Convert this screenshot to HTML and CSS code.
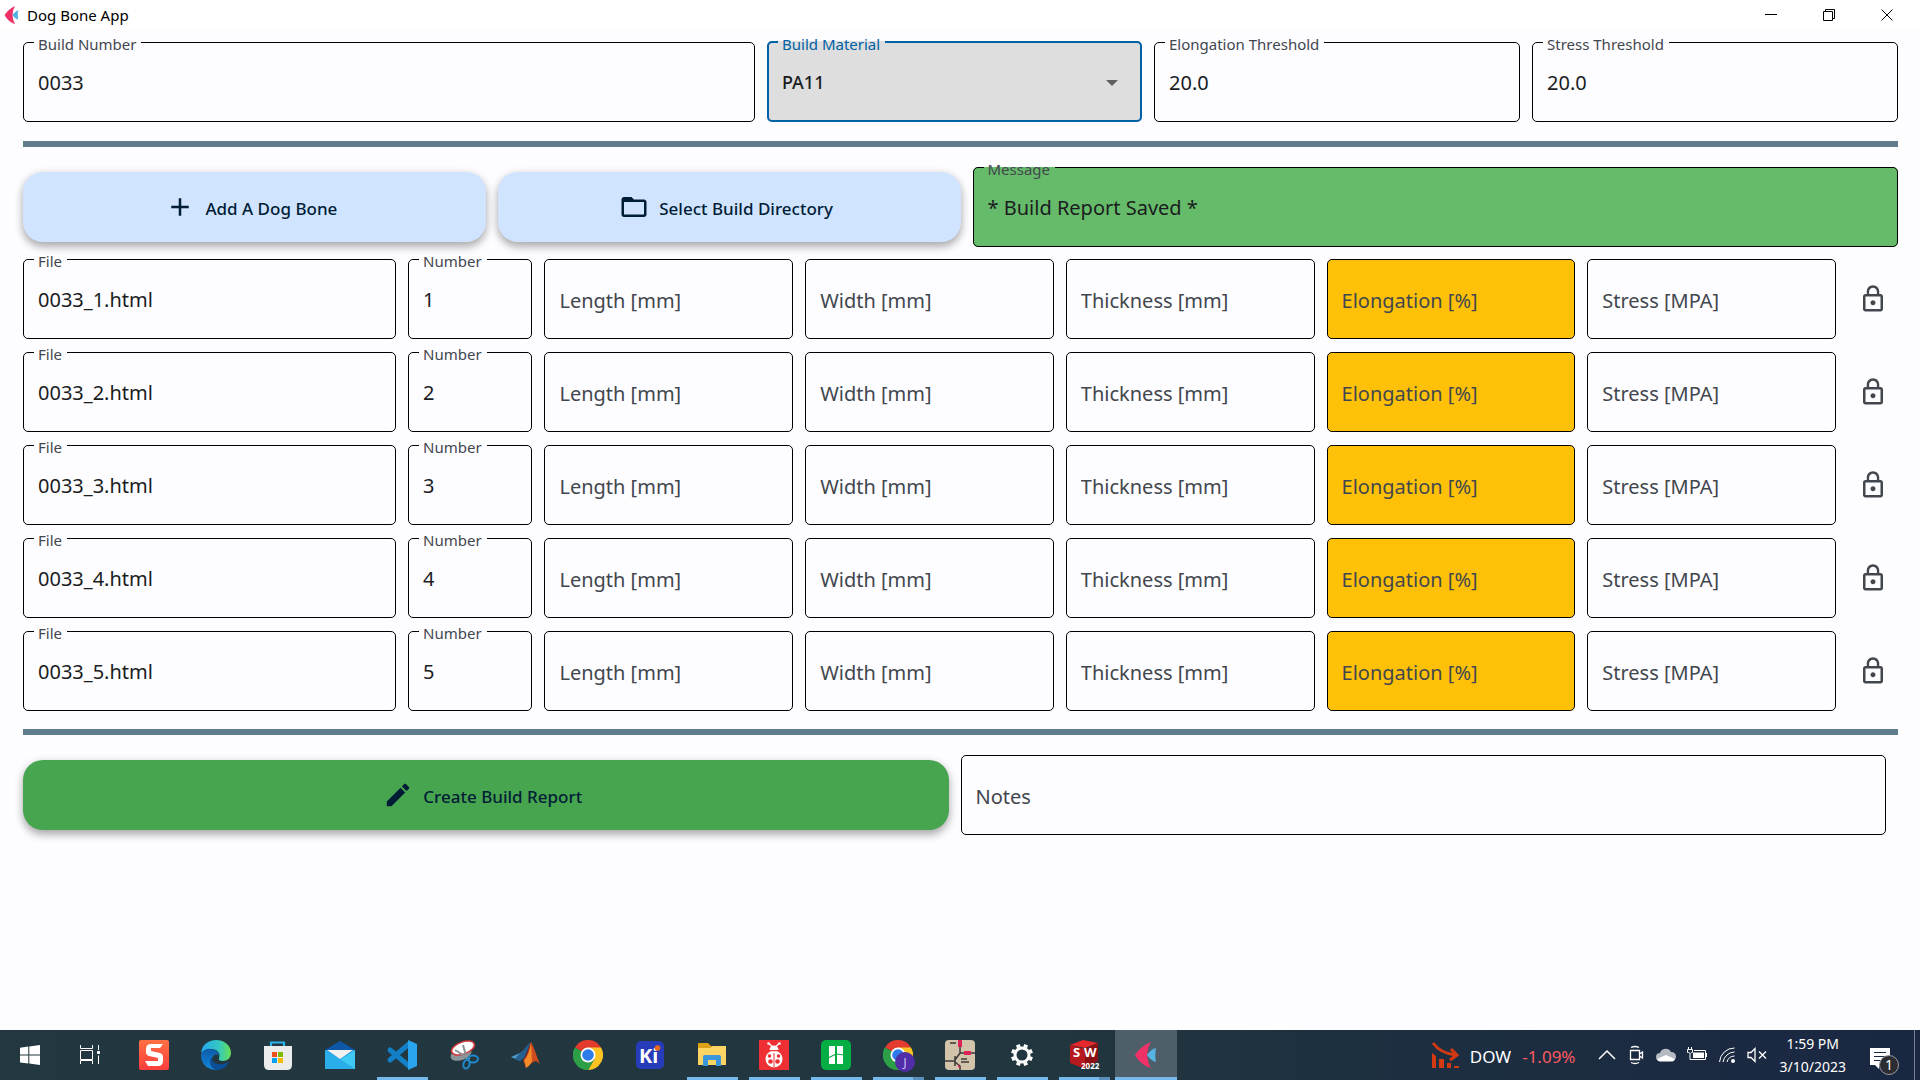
FILE: index.html
```html
<!DOCTYPE html>
<html lang="en">
<head>
<meta charset="utf-8">
<title>Dog Bone App</title>
<link rel="stylesheet" href="styles.css">
</head>
<body>
<svg class="sprite" aria-hidden="true">
  <symbol id="lock" viewBox="0 0 24 24"><path d="M12 17c1.1 0 2-.9 2-2s-.9-2-2-2-2 .9-2 2 .9 2 2 2zm6-9h-1V6c0-2.76-2.24-5-5-5S7 3.24 7 6v2H6c-1.1 0-2 .9-2 2v10c0 1.1.9 2 2 2h12c1.1 0 2-.9 2-2V10c0-1.1-.9-2-2-2zM8.900 6c0-1.710 1.390-3.100 3.100-3.100s3.100 1.390 3.100 3.100v2H8.900V6zM18 20H6V10h12v10z"/></symbol>
  <symbol id="flet" viewBox="0 0 30 30"><path fill="#ee3167" d="M20 2C13 5 7 10 4 15c3 6 9 11 16 13-5-8-5-18 0-26z"/><path fill="#56b4e4" d="M16 15c2-3 5-6 9-7-1 5-1 10 0 14-4-1-7-4-9-7z"/></symbol>
  <symbol id="chrome" viewBox="0 0 30 30"><path fill="#e33b2e" d="M15 15 2 7.500A15 15 0 0 1 28 7.500z"/><path fill="#2c9f47" d="M15 15 15 30A15 15 0 0 1 2 7.500z"/><path fill="#fcc422" d="M15 15V7.500h13A15 15 0 0 1 15 30l6.500-11z"/><path fill="#2c9f47" d="M2 7.500 8.500 18.700 15 22.500 21.500 18.700 15 30A15 15 0 0 1 2 7.500z"/><circle cx="15" cy="15" r="7.500" fill="#fff"/><circle cx="15" cy="15" r="5.800" fill="#2f7bea"/></symbol>
</svg>

<header class="titlebar">
  <svg class="app-logo" viewBox="3 2 23 26" preserveAspectRatio="none" aria-hidden="true"><use href="#flet" width="30" height="30"/></svg>
  <h1>Dog Bone App</h1>
  <div class="window-controls">
    <button type="button" aria-label="Minimize"><svg viewBox="0 0 12 12"><path d="M0 5.500h12"/></svg></button>
    <button type="button" aria-label="Restore"><svg viewBox="0 0 12 12"><path d="M.5 2.500h9v9h-9zM2.500 2.500v-2h9v9h-2"/></svg></button>
    <button type="button" aria-label="Close"><svg viewBox="0 0 12 12"><path d="M.5.5l11 11M11.500.5l-11 11"/></svg></button>
  </div>
</header>

<main>
  <section class="row settings">
    <fieldset class="field"><legend><label for="build-number">Build Number</label></legend><input id="build-number" type="text" value="0033"></fieldset>
    <fieldset class="field focused"><legend><label for="material">Build Material</label></legend>
      <select id="material"><option>PA11</option></select>
      <svg class="arrow" viewBox="0 0 12 6" aria-hidden="true"><path d="M0 0h12L6 6z"/></svg>
    </fieldset>
    <fieldset class="field"><legend><label for="elongation-threshold">Elongation Threshold</label></legend><input id="elongation-threshold" type="text" value="20.0"></fieldset>
    <fieldset class="field"><legend><label for="stress-threshold">Stress Threshold</label></legend><input id="stress-threshold" type="text" value="20.0"></fieldset>
  </section>

  <hr>

  <section class="row actions">
    <button type="button" class="action"><svg viewBox="0 0 24 24" aria-hidden="true"><path d="M19 13h-6v6h-2v-6H5v-2h6V5h2v6h6z"/></svg><span>Add A Dog Bone</span></button>
    <button type="button" class="action"><svg viewBox="0 0 24 24" aria-hidden="true"><path d="M20 6h-8l-2-2H4c-1.100 0-1.990.9-1.990 2L2 18c0 1.100.9 2 2 2h16c1.100 0 2-.9 2-2V8c0-1.100-.9-2-2-2zm0 12H4V8h16z"/></svg><span>Select Build Directory</span></button>
    <fieldset class="field success"><legend><label for="message">Message</label></legend><input id="message" type="text" value="* Build Report Saved *" readonly></fieldset>
  </section>

  <section class="bones">
    <div class="row bone">
      <fieldset class="field"><legend><label for="file-1">File</label></legend><input id="file-1" type="text" value="0033_1.html"></fieldset>
      <fieldset class="field"><legend><label for="number-1">Number</label></legend><input id="number-1" type="text" value="1"></fieldset>
      <input class="blank" type="text" aria-label="Length 1" placeholder="Length [mm]">
      <input class="blank" type="text" aria-label="Width 1" placeholder="Width [mm]">
      <input class="blank" type="text" aria-label="Thickness 1" placeholder="Thickness [mm]">
      <input class="blank warning" type="text" aria-label="Elongation 1" placeholder="Elongation [%]">
      <input class="blank" type="text" aria-label="Stress 1" placeholder="Stress [MPA]">
      <button type="button" class="lock" aria-label="Lock row 1"><svg><use href="#lock"/></svg></button>
    </div>
    <div class="row bone">
      <fieldset class="field"><legend><label for="file-2">File</label></legend><input id="file-2" type="text" value="0033_2.html"></fieldset>
      <fieldset class="field"><legend><label for="number-2">Number</label></legend><input id="number-2" type="text" value="2"></fieldset>
      <input class="blank" type="text" aria-label="Length 2" placeholder="Length [mm]">
      <input class="blank" type="text" aria-label="Width 2" placeholder="Width [mm]">
      <input class="blank" type="text" aria-label="Thickness 2" placeholder="Thickness [mm]">
      <input class="blank warning" type="text" aria-label="Elongation 2" placeholder="Elongation [%]">
      <input class="blank" type="text" aria-label="Stress 2" placeholder="Stress [MPA]">
      <button type="button" class="lock" aria-label="Lock row 2"><svg><use href="#lock"/></svg></button>
    </div>
    <div class="row bone">
      <fieldset class="field"><legend><label for="file-3">File</label></legend><input id="file-3" type="text" value="0033_3.html"></fieldset>
      <fieldset class="field"><legend><label for="number-3">Number</label></legend><input id="number-3" type="text" value="3"></fieldset>
      <input class="blank" type="text" aria-label="Length 3" placeholder="Length [mm]">
      <input class="blank" type="text" aria-label="Width 3" placeholder="Width [mm]">
      <input class="blank" type="text" aria-label="Thickness 3" placeholder="Thickness [mm]">
      <input class="blank warning" type="text" aria-label="Elongation 3" placeholder="Elongation [%]">
      <input class="blank" type="text" aria-label="Stress 3" placeholder="Stress [MPA]">
      <button type="button" class="lock" aria-label="Lock row 3"><svg><use href="#lock"/></svg></button>
    </div>
    <div class="row bone">
      <fieldset class="field"><legend><label for="file-4">File</label></legend><input id="file-4" type="text" value="0033_4.html"></fieldset>
      <fieldset class="field"><legend><label for="number-4">Number</label></legend><input id="number-4" type="text" value="4"></fieldset>
      <input class="blank" type="text" aria-label="Length 4" placeholder="Length [mm]">
      <input class="blank" type="text" aria-label="Width 4" placeholder="Width [mm]">
      <input class="blank" type="text" aria-label="Thickness 4" placeholder="Thickness [mm]">
      <input class="blank warning" type="text" aria-label="Elongation 4" placeholder="Elongation [%]">
      <input class="blank" type="text" aria-label="Stress 4" placeholder="Stress [MPA]">
      <button type="button" class="lock" aria-label="Lock row 4"><svg><use href="#lock"/></svg></button>
    </div>
    <div class="row bone">
      <fieldset class="field"><legend><label for="file-5">File</label></legend><input id="file-5" type="text" value="0033_5.html"></fieldset>
      <fieldset class="field"><legend><label for="number-5">Number</label></legend><input id="number-5" type="text" value="5"></fieldset>
      <input class="blank" type="text" aria-label="Length 5" placeholder="Length [mm]">
      <input class="blank" type="text" aria-label="Width 5" placeholder="Width [mm]">
      <input class="blank" type="text" aria-label="Thickness 5" placeholder="Thickness [mm]">
      <input class="blank warning" type="text" aria-label="Elongation 5" placeholder="Elongation [%]">
      <input class="blank" type="text" aria-label="Stress 5" placeholder="Stress [MPA]">
      <button type="button" class="lock" aria-label="Lock row 5"><svg><use href="#lock"/></svg></button>
    </div>
  </section>

  <hr class="lower">

  <section class="row report">
    <button type="button" class="action create"><svg viewBox="0 0 24 24" aria-hidden="true"><path d="M3 17.250V21h3.750L17.810 9.940l-3.750-3.750L3 17.250zM20.710 7.040c.39-.39.39-1.020 0-1.410l-2.340-2.340c-.39-.39-1.020-.39-1.410 0l-1.830 1.830 3.750 3.750 1.830-1.830z"/></svg><span>Create Build Report</span></button>
    <input class="blank" type="text" aria-label="Notes" placeholder="Notes">
  </section>
</main>

<footer class="taskbar">
  <nav class="launchers" aria-label="Taskbar">
    <button type="button" aria-label="Start"><svg viewBox="0 0 30 30" fill="#fff"><path d="M5 7.800l8.300-1.200v8H5zM14.300 6.400 25 5v9.600H14.300zM5 15.600h8.300v8L5 22.400zM14.300 15.600H25V25l-10.700-1.400z"/></svg></button>
    <button type="button" aria-label="Task View"><svg viewBox="0 0 30 30" fill="none" stroke="#fff"><path d="M5.500 5v3.500h12V5M5.500 10.500h12v9h-12zM5.500 24v-3.500h12V24M23.500 5v5M23.500 15.500V24"/><path fill="#fff" d="M22.500 11.500h2v2h-2z"/></svg></button>
    <button type="button" aria-label="Snagit" class="first-app"><svg viewBox="0 0 30 30"><defs><linearGradient id="sg" x2="0" y2="1"><stop stop-color="#ff7043"/><stop offset="1" stop-color="#fb3d3d"/></linearGradient></defs><rect width="30" height="30" rx="2" fill="url(#sg)"/><path d="M24 4H12q-5 0-5 5v3q0 3 3 4l9 2v3H6l3 5h10q5 0 5-5v-4q0-3-3-4l-9-2V8h9z" fill="#fff"/></svg></button>
    <button type="button" aria-label="Edge"><svg viewBox="0 0 30 30"><defs><linearGradient id="e1" x2="1"><stop stop-color="#25a9ef"/><stop offset=".6" stop-color="#35c8c0"/><stop offset="1" stop-color="#66e052"/></linearGradient><linearGradient id="e2" x2="0" y2="1"><stop stop-color="#0d5ba8"/><stop offset="1" stop-color="#1288dc"/></linearGradient></defs><path fill="url(#e1)" d="M0 13C1 5 7 0 15 0c9 0 15 6 15 13 0 5-4 8-8 8-3 0-5-1-4-3 2-5-2-9-8-9-5 0-8 2-10 4z"/><path fill="url(#e2)" d="M0 14c2-4 6-6 10-5 5 0 8 4 8 7-2-3-7-1-7 4 0 4 3 8 8 9C9 32-1 25 0 14z"/><path fill="#0c4f99" d="M11 17c-1 6 6 10 17 5-3 6-8 8-13 8-6-2-8-9-4-13z"/></svg></button>
    <button type="button" aria-label="Microsoft Store"><svg viewBox="0 0 30 30"><path d="M8 8V2.500h13V8" fill="none" stroke="#2cb4ea" stroke-width="2.200"/><path d="M1 6h28v19q0 5-5 5H6q-5 0-5-5z" fill="#ececec"/><path fill="#f1511b" d="M9 12h5v5H9z"/><path fill="#80bb01" d="M15 12h5v5h-5z"/><path fill="#00a3ee" d="M9 18h5v5H9z"/><path fill="#fbb900" d="M15 18h5v5h-5z"/></svg></button>
    <button type="button" aria-label="Mail"><svg viewBox="0 0 30 30"><path fill="#0d57a7" d="M0 10 15 1l15 9v4H0z"/><path fill="#1e91dc" d="M0 10h30v19H0z"/><path fill="#2aaeea" d="M0 10l15 9L0 29z"/><path fill="#3fcaf5" d="M30 10 0 29h30z"/><path fill="#2aaeea" d="M0 10l15 9 15 10H0z"/><path fill="#f1f1f1" d="M2 10h26l-13 9z"/></svg></button>
    <button type="button" aria-label="Visual Studio Code" class="running"><svg viewBox="0 0 30 30"><path d="M3 10 22 26M3 20 22 4" stroke="#137fc6" stroke-width="5" stroke-linecap="round"/><path d="M21 0l9 4v22l-9 4z" fill="#2ba4f0"/></svg></button>
    <button type="button" aria-label="Snipping Tool"><svg viewBox="0 0 30 30"><ellipse cx="12" cy="14" rx="11" ry="6" fill="#8c9599" transform="rotate(-20 12 14)"/><ellipse cx="14" cy="8" rx="12" ry="6" fill="#fff" stroke="#cf3438" stroke-width="1.500" transform="rotate(-20 14 8)"/><path d="M14 5l4 14M6 10l15 9" stroke="#8a9295" stroke-width="2"/><g fill="none" stroke="#2189cd" stroke-width="2"><ellipse cx="24" cy="19" rx="5" ry="3.500"/><ellipse cx="17.500" cy="24" rx="3" ry="4.500" transform="rotate(15 17 24)"/></g></svg></button>
    <button type="button" aria-label="MATLAB"><svg viewBox="0 0 30 30"><path fill="#4d9bd0" d="M0 17l9-4 5-3-5 11z"/><path fill="#285f91" d="M9 13c4-2 6-8 11-11l-7 16-4 3-5-2z"/><path fill="#a52a1b" d="M20 2c-3 6-4 14-8 18l3 8 7-6z"/><path fill="#f28b28" d="M20 2c-1 8-4 16-7 18l2 8c4-2 6-6 8-10z"/><path fill="#cf4c20" d="M20 2c4 7 6 16 9 22-3-3-5-4-8-1z"/></svg></button>
    <button type="button" aria-label="Chrome"><svg><use href="#chrome"/></svg></button>
    <button type="button" aria-label="KiCad"><svg viewBox="0 0 30 30"><rect x="1" y="1" width="28" height="28" rx="5" fill="#263cb9"/><text x="4" y="23" class="kicad">Ki</text><circle cx="22.500" cy="8" r="2.800" fill="#f06a1c"/></svg></button>
    <button type="button" aria-label="File Explorer" class="running"><svg viewBox="0 0 30 30"><path fill="#dda116" d="M1 3h10l3 3h14v5H1z"/><path fill="#fbd464" d="M1 8h12l3-2h13v19H1z"/><path fill="#3c96dc" d="M6 26V17q0-2 2-2h14q2 0 2 2v9h-5v-6h-8v6z"/></svg></button>
    <button type="button" aria-label="Ladybug" class="running"><svg viewBox="0 0 30 30"><path fill="#ee3034" d="M0 0h30v30H0z"/><path d="M10 3.500l3 3M20 3.500l-3 3" stroke="#fff" stroke-width="1.300"/><circle cx="9.500" cy="3.500" r="1.300" fill="#fff"/><circle cx="20.500" cy="3.500" r="1.300" fill="#fff"/><path d="M10.500 10a4.500 4.500 0 0 1 9 0z" fill="#fff"/><ellipse cx="15" cy="19" rx="8.500" ry="8.500" fill="#fff"/><g fill="#ee3034"><circle cx="10.500" cy="16" r="1.800"/><circle cx="19.500" cy="16" r="1.800"/><circle cx="11.500" cy="21.500" r="2.300"/><circle cx="18.500" cy="21.500" r="2.300"/><path d="M14.500 13h1v14h-1zM9 10.300h12v1H9z"/></g></svg></button>
    <button type="button" aria-label="Build Studio" class="running"><svg viewBox="0 0 30 30"><rect width="30" height="30" rx="5" fill="#04ae42"/><path fill="#fff" d="M8 6h6v18H8zM16 6h6v18h-6z"/><path d="M7 18l8-4 8 1" fill="none" stroke="#04ae42" stroke-width="1.200"/></svg></button>
    <button type="button" aria-label="Chrome profile J" class="running stacked"><svg viewBox="0 0 30 30"><use href="#chrome" width="30" height="30"/><circle cx="22" cy="22" r="10" fill="#512da8"/><text x="22" y="27" class="profile">J</text></svg></button>
    <button type="button" aria-label="Circuit Simulator" class="running"><svg viewBox="0 0 30 30"><rect width="30" height="30" rx="4" fill="#d1c4aa"/><path d="M15 0v13M0 21h10M10 16v10M10 20l5-7h15M10 22l5 4v4M5 3h6M16 19h6M16 22h8" stroke="#3b3838" stroke-width="1.500" fill="none"/><path fill="#dd2458" d="M13 0h4v7h-4zM19 11h7v4h-7zM13 24l3 4-3-1z"/></svg></button>
    <button type="button" aria-label="Settings" class="running"><svg viewBox="0 0 30 30" fill="none" stroke="#fff"><circle cx="15" cy="15" r="7" stroke-width="3"/><path stroke-width="4" d="M15 4v3M15 23v3" transform="rotate(22.500 15 15)"/><path stroke-width="4" d="M15 4v3M15 23v3" transform="rotate(67.500 15 15)"/><path stroke-width="4" d="M15 4v3M15 23v3" transform="rotate(112.500 15 15)"/><path stroke-width="4" d="M15 4v3M15 23v3" transform="rotate(157.500 15 15)"/></svg></button>
    <button type="button" aria-label="SolidWorks 2022" class="running stacked"><svg viewBox="0 0 30 30"><path fill="#e5282c" d="M1 5 14 0l15 3-13 5z"/><path fill="#b61a1e" d="M1 5l15 4v20L1 23z"/><path fill="#8c1014" d="M16 9l13-6v18l-13 8z"/><text x="4" y="17" class="solid">S</text><text x="15" y="17" class="solid">W</text><text x="12" y="29" class="year">2022</text></svg></button>
    <button type="button" aria-label="Dog Bone App" class="running active"><svg><use href="#flet"/></svg></button>
  </nav>

  <div class="tray">
    <button type="button" class="stock"><svg viewBox="0 0 28 28" width="28" height="28" aria-hidden="true"><path d="M2 2c5 7 13 11 23 12M20 8l6 6-7 5" fill="none" stroke="#d43a12" stroke-width="3"/><path fill="#d43a12" d="M1 12l4 3v12H1zM8 18h5v9H8zM16 22h4v5h-4zM23 25h5v2h-5z"/></svg><span>DOW</span><span class="down">-1.09%</span></button>
    <div class="status">
      <svg viewBox="0 0 18 20" width="18" height="20"><path stroke-width="1.500" d="M1 14l8-8 8 8"/></svg>
      <svg viewBox="0 0 18 20" width="18" height="20"><path stroke-width="1.300" d="M3.500 5.500h9v9h-9zM12.500 9l3-2v6l-3-2M4 2.500q4-2 8 0M4 17.500q4 2 8 0"/></svg>
      <svg viewBox="0 0 20 20" width="20" height="20"><path fill="#b5bac3" stroke="none" d="M4 16a4 4 0 0 1 0-8 6 6 0 0 1 11-1 4.500 4.500 0 0 1 1 9z"/><path fill="#fff" stroke="none" d="M1 14l9-4 9 4q-1 2.500-3 2.500H4q-2 0-3-2.500z"/></svg>
      <svg viewBox="0 0 20 20" width="20" height="20"><path d="M.5 4.500h5v3h-1l-1 1-2-1h-1zM1.500 4V2M4.500 4V2M3 9v5.500h15.500v-9H7M19.500 8v4"/><path fill="#fff" stroke="none" d="M6 7.500h11v5.500H6z"/></svg>
      <svg viewBox="0 0 18 20" width="18" height="20"><path d="M1.500 17A15 15 0 0 1 16.500 3M5 17A12 12 0 0 1 16.500 7M9 17a8 8 0 0 1 7.500-6"/><circle cx="15" cy="16" r="2" fill="#fff" stroke="none"/></svg>
      <svg viewBox="0 0 20 20" width="20" height="20"><path stroke-width="1.300" d="M1 7.500h3l4-4v13l-4-4H1zM12 6.500l7 7M19 6.500l-7 7"/></svg>
    </div>
    <div class="clock"><time>1:59 PM</time><time>3/10/2023</time></div>
    <button type="button" class="notify" aria-label="Notifications"><svg viewBox="0 0 32 32" width="32" height="32"><path fill="#fff" d="M1 2h20v17H10v4l-4-4H1z"/><path d="M5 6.500h12M5 10.500h12M5 14.500h8" stroke="#1b2a43"/></svg><span class="badge">1</span></button>
  </div>
</footer>
</body>
</html>
```
FILE: styles.css
```css
* { box-sizing: border-box; }

body {
  margin: 0;
  min-height: 100vh;
  display: flex;
  flex-direction: column;
  background: #fdfcff;
  color: #1a1c1e;
  font-family: "Noto Sans", "Open Sans", sans-serif;
}

button, input, select { font: inherit; color: inherit; }
button { border: 0; background: none; padding: 0; }
.sprite { display: none; }

/* Window title bar */
.titlebar {
  display: flex;
  align-items: center;
  height: 30px;
  padding: 0 4px;
  background: #fff;
  color: #000;
}
.app-logo { width: 15px; height: 18px; margin-right: 8px; }
.titlebar h1 { margin: 0; font-size: 15px; font-weight: 400; line-height: 20px; }
.window-controls { display: flex; margin-left: auto; }
.window-controls button { width: 58px; height: 28px; display: grid; place-items: center; }
.window-controls svg { width: 12px; height: 12px; fill: none; stroke: #000; }

main { flex: 1; padding: 2px 22px 20px 23px; }

.row { display: grid; gap: 12px; align-items: end; }
.settings { grid-template-columns: 2fr 375px 1fr 1fr; }
.actions { grid-template-columns: 1fr 1fr 2fr; }
.bone { grid-template-columns: 3fr 1fr repeat(5, 2fr) 50px; }
.report { grid-template-columns: 1fr 1fr; align-items: center; padding-right: 12px; }
.bones { display: grid; gap: 3px; margin-top: 2px; }

hr { height: 6px; margin: 19px 0 10px; border: 0; background: #607d8b; }
hr.lower { margin: 18px 0 20px; }

/* Outlined fields whose label interrupts the top border */
.field {
  position: relative;
  min-width: 0;
  margin: 0;
  padding: 0 10px;
  border: 1px solid #000;
  border-radius: 5px;
}
.field legend { padding: 0 5px 0 4px; color: #42474e; font-size: 15px; line-height: 20px; }
.field label { display: block; padding-top: 4px; line-height: 16px; }
.field input, .field select {
  display: block;
  width: 100%;
  padding: 18px 4px 27px;
  border: 0;
  outline: 0;
  background: none;
  font-size: 20px;
  line-height: 24px;
  height: 69px;
}
.focused { border: 2px solid #0061a4; background: #dededf; padding: 0 9px; }
.focused legend { color: #0061a4; }
.field select { appearance: none; height: 68px; padding-bottom: 26px; font-size: 18px; font-weight: 500; }
.arrow { position: absolute; right: 22px; top: 28px; width: 12px; height: 6px; fill: #5f6062; }
.success { background: #66bb6a; }

.blank {
  width: 100%;
  min-width: 0;
  height: 80px;
  padding: 2px 14px 0;
  border: 1px solid #000;
  border-radius: 5px;
  background: transparent;
  font-size: 20px;
}
.blank::placeholder { color: #42474e; opacity: 1; }
.warning { background: #ffc107; }

.lock { height: 80px; display: grid; place-items: center; }
.lock svg { width: 30px; height: 30px; fill: #42474e; }

.action {
  display: flex;
  align-items: center;
  justify-content: center;
  gap: 10px;
  height: 70px;
  padding-right: 6px;
  border-radius: 20px;
  background: #d1e4ff;
  box-shadow: 0 5px 8px rgba(0, 0, 0, .28), 0 1px 10px rgba(0, 0, 0, .1);
  color: #001d36;
  font-size: 17px;
  font-weight: 500;
}
.action svg { width: 30px; height: 30px; fill: #001d36; }
.action span { padding-top: 2px; }
.actions .action { margin-bottom: 5px; }
.create { background: #48a54f; }

/* Taskbar */
.taskbar {
  display: flex;
  justify-content: space-between;
  height: 50px;
  background: linear-gradient(90deg, #22373f, #22363f 55%, #1c2e40 75%, #1a2742);
  color: #fff;
}
.launchers { display: flex; }
.launchers button { position: relative; width: 62px; display: grid; place-items: center; }
.launchers button:nth-child(-n+2) { width: 60px; }
.launchers .first-app { margin-left: 3px; }
.launchers svg { width: 30px; height: 30px; overflow: visible; }
.running::after {
  content: "";
  position: absolute;
  left: 6px;
  right: 5px;
  bottom: 0;
  height: 3px;
  background: #76b9ed;
}
.stacked::after { background: linear-gradient(90deg, #76b9ed 40px, #5b90bd 40px); }
.launchers .active { background: #4f5f6a; }
.active::after { left: 0; right: 0; }
.kicad { font-size: 20px; font-weight: 700; fill: #fff; }
.profile { font-size: 13px; text-anchor: middle; fill: #cbb9f5; }
.solid { font-size: 13px; font-weight: 700; fill: #fff; }
.year { font-size: 8px; font-weight: 700; fill: #fff; }

.tray { display: flex; align-items: center; }
.stock { display: flex; align-items: center; gap: 11px; margin-right: 22px; font-size: 17px; }
.stock span { padding-top: 2px; }
.down { color: #fb5b60; }
.status { display: flex; gap: 11px; }
.status svg { fill: none; stroke: #fff; stroke-width: 1; }
.clock {
  display: flex;
  flex-direction: column;
  align-items: center;
  margin: 0 23px 0 13px;
  font-size: 14px;
  line-height: 23px;
}
.notify { position: relative; width: 46px; height: 50px; padding: 13px 0 0; margin-right: 5px; border-right: 1px solid #77808f; text-align: left; }
.notify svg { display: block; }
.badge {
  position: absolute;
  left: 10px;
  top: 25px;
  width: 20px;
  height: 20px;
  border: 1px solid #9a9da3;
  border-radius: 50%;
  background: #2b2d33;
  font-size: 14px;
  line-height: 18px;
  text-align: center;
}
```
